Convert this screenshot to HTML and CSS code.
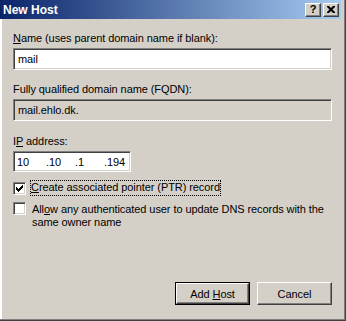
FILE: index.html
```html
<!DOCTYPE html>
<html>
<head>
<meta charset="utf-8">
<link rel="stylesheet" href="styles.css">
</head>
<body>
<div class="win">
  <div class="title">
    <span class="title-text">New Host</span>
    <div class="tbtns">
      <span class="tb help">?</span>
      <span class="tb close"><svg width="8" height="7" viewBox="0 0 8 7"><path d="M0 0h2l2 2 2-2h2v1L5.5 3.5 8 6v1H6L4 5 2 7H0V6l2.5-2.5L0 1z" fill="#000"/></svg></span>
    </div>
  </div>
  <div class="body">
    <div class="lbl"><u>N</u>ame (uses parent domain name if blank):</div>
    <div class="field">mail</div>
    <div class="lbl gap">Fully qualified domain name (FQDN):</div>
    <div class="field disabled">mail.ehlo.dk.</div>
    <div class="lbl gap ipgap">I<u>P</u> address:</div>
    <div class="field ip"><span class="oct">10</span><span class="oct">.10</span><span class="oct">.1</span><span class="oct">.194</span></div>
    <div class="chk-row first">
      <span class="box"><svg width="7" height="7" viewBox="0 0 7 7"><path d="M0 2h1v1h1v1h1v-1h1v-1h1v-1h1v-1h1v3h-1v1h-1v1h-1v1h-1v1h-1v-1h-1v-1h-1z" fill="#000"/></svg></span>
      <span class="chk-label focus"><u>C</u>reate associated pointer (PTR) record</span>
    </div>
    <div class="chk-row second">
      <span class="box"></span>
      <span class="chk-label">All<u>o</u>w any authenticated user to update DNS records with the<br>same owner name</span>
    </div>
    <div class="btns">
      <span class="btn default"><span class="btn-in"><span>Add <u>H</u>ost</span></span></span>
      <span class="btn"><span class="btn-in"><span>Cancel</span></span></span>
    </div>
  </div>
</div>
</body>
</html>
```
FILE: styles.css
```css
html, body {
  margin: 0;
  padding: 0;
  background: #d4d0c8;
}
.win {
  width: 346px;
  height: 321px;
  box-sizing: border-box;
  background: #d4d0c8;
  padding: 0 5px 5px 0;
  box-shadow: inset -1px -1px #404040, inset -2px -2px #808080, inset 2px 0 #ffffff;
  font-family: "Liberation Sans", Arial, sans-serif;
  font-size: 11px;
  color: #000;
  display: flex;
  flex-direction: column;
}
.title {
  height: 19px;
  background: linear-gradient(to right, #0a246a, #a6caf0);
  display: flex;
  align-items: center;
  justify-content: space-between;
  padding: 0 2px 0 3px;
  flex: none;
}
.title-text {
  color: #fff;
  font-weight: bold;
  font-size: 12px;
}
.tbtns {
  display: flex;
  gap: 2px;
}
.tb {
  width: 16px;
  height: 14px;
  box-sizing: border-box;
  background: #d4d0c8;
  border: 1px solid;
  border-color: #fff #404040 #404040 #fff;
  box-shadow: inset -1px -1px #808080;
  display: flex;
  align-items: center;
  justify-content: center;
  font-weight: bold;
  font-size: 11px;
  line-height: 1;
}
.body {
  flex: 1;
  display: flex;
  flex-direction: column;
  padding: 13px 9px 0 13px;
  letter-spacing: -0.08px;
}
.lbl {
  line-height: 13px;
  margin-bottom: 3px;
}
.lbl.gap {
  margin-top: 13px;
}
.lbl.ipgap {
  margin-top: 14px;
}
u {
  text-decoration: underline;
  text-underline-offset: 1px;
}
.field {
  height: 22px;
  box-sizing: border-box;
  background: #fff;
  border: 1px solid;
  border-color: #808080 #fff #fff #808080;
  box-shadow: inset 1px 1px #404040, inset -1px -1px #d4d0c8;
  padding: 0 4px;
  display: flex;
  align-items: center;
}
.field.disabled {
  background: #d4d0c8;
}
.field.ip {
  width: 118px;
  height: 21px;
  padding: 0 0 0 3px;
}
.oct {
  width: 29px;
  flex: none;
}
.chk-row {
  display: flex;
  align-items: flex-start;
}
.chk-row.first {
  margin-top: 8px;
  align-items: center;
}
.chk-row.second {
  margin-top: 6px;
}
.box {
  width: 13px;
  height: 13px;
  box-sizing: border-box;
  flex: none;
  background: #fff;
  border: 1px solid;
  border-color: #808080 #fff #fff #808080;
  box-shadow: inset 1px 1px #404040, inset -1px -1px #d4d0c8;
  display: flex;
  align-items: center;
  justify-content: center;
}
.chk-label {
  margin-left: 4px;
  line-height: 13px;
  padding: 1px 1px 0;
}
.chk-label.focus {
  border: 1px dotted #000;
  padding: 0 0 1px 0;
}
.second .chk-label {
  margin-left: 5px;
  margin-top: 0;
}
.btns {
  margin-top: auto;
  margin-bottom: 11px;
  display: flex;
  justify-content: flex-end;
  gap: 7px;
}
.btn {
  width: 75px;
  height: 23px;
  box-sizing: border-box;
  background: #d4d0c8;
  border: 1px solid;
  border-color: #fff #404040 #404040 #fff;
  box-shadow: inset -1px -1px #808080;
  display: flex;
}
.btn.default {
  border: 1px solid #000;
  box-shadow: none;
}
.btn-in {
  flex: 1;
  display: flex;
  align-items: center;
  justify-content: center;
  white-space: pre;
}
.btn.default .btn-in {
  border: 1px solid;
  border-color: #fff #404040 #404040 #fff;
  box-shadow: inset -1px -1px #808080;
}
```
